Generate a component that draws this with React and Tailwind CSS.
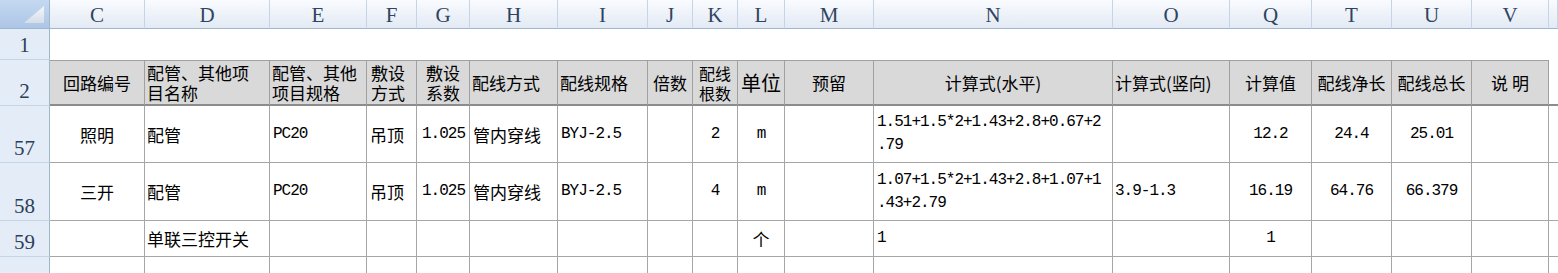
import React from 'react';

const CJK = "font-['Noto_Sans_CJK_SC',sans-serif]";
const MONO = "font-['Liberation_Mono','Noto_Sans_CJK_SC',monospace] text-[16px] tracking-[-1px]";

const letters = ['C', 'D', 'E', 'F', 'G', 'H', 'I', 'J', 'K', 'L', 'M', 'N', 'O', 'Q', 'T', 'U', 'V', ''];

const heads = [
    { t: '回路编号', a: 'justify-center' },
    { t: ['配管、其他项', '目名称'], a: 'justify-start pl-[2px]' },
    { t: ['配管、其他', '项目规格'], a: 'justify-start pl-[2px]' },
    { t: ['敷设', '方式'], a: 'justify-start pl-[4px]' },
    { t: ['敷设', '系数'], a: 'justify-center' },
    { t: '配线方式', a: 'justify-start pl-[2px]' },
    { t: '配线规格', a: 'justify-start pl-[2px]' },
    { t: '倍数', a: 'justify-center' },
    { t: ['配线', '根数'], a: 'justify-center', s: 'text-[16px]' },
    { t: '单位', a: 'justify-center', s: 'text-[20px]' },
    { t: '预留', a: 'justify-center' },
    { t: '计算式(水平)', a: 'justify-center' },
    { t: '计算式(竖向)', a: 'justify-start pl-[2px]' },
    { t: '计算值', a: 'justify-center' },
    { t: '配线净长', a: 'justify-center' },
    { t: '配线总长', a: 'justify-center' },
    { t: '说 明', a: 'justify-center' },
];

// a = alignment, m = mono font
const rows = [
    {
        n: 57,
        cells: [
            { t: '照明', a: 'justify-center' },
            { t: '配管', a: 'justify-start pl-[2px]' },
            { t: 'PC20', a: 'justify-start pl-[3px]', m: true },
            { t: '吊顶', a: 'justify-start pl-[3px]' },
            { t: '1.025', a: 'justify-start pl-[5px]', m: true },
            { t: '管内穿线', a: 'justify-start pl-[3px]' },
            { t: 'BYJ-2.5', a: 'justify-start pl-[3px]', m: true },
            { t: '' },
            { t: '2', a: 'justify-center', m: true },
            { t: 'm', a: 'justify-center', m: true },
            { t: '' },
            { t: ['1.51+1.5*2+1.43+2.8+0.67+2', '.79'], a: 'justify-start pl-[3px]', m: true },
            { t: '' },
            { t: '12.2', a: 'justify-center', m: true },
            { t: '24.4', a: 'justify-center', m: true },
            { t: '25.01', a: 'justify-center', m: true },
            { t: '' },
        ],
    },
    {
        n: 58,
        cells: [
            { t: '三开', a: 'justify-center' },
            { t: '配管', a: 'justify-start pl-[2px]' },
            { t: 'PC20', a: 'justify-start pl-[3px]', m: true },
            { t: '吊顶', a: 'justify-start pl-[3px]' },
            { t: '1.025', a: 'justify-start pl-[5px]', m: true },
            { t: '管内穿线', a: 'justify-start pl-[3px]' },
            { t: 'BYJ-2.5', a: 'justify-start pl-[3px]', m: true },
            { t: '' },
            { t: '4', a: 'justify-center', m: true },
            { t: 'm', a: 'justify-center', m: true },
            { t: '' },
            { t: ['1.07+1.5*2+1.43+2.8+1.07+1', '.43+2.79'], a: 'justify-start pl-[3px]', m: true },
            { t: '3.9-1.3', a: 'justify-start pl-[2px]', m: true },
            { t: '16.19', a: 'justify-center', m: true },
            { t: '64.76', a: 'justify-center', m: true },
            { t: '66.379', a: 'justify-center', m: true },
            { t: '' },
        ],
    },
    {
        n: 59,
        cells: [
            { t: '' },
            { t: '单联三控开关', a: 'justify-start pl-[2px]' },
            { t: '' },
            { t: '' },
            { t: '' },
            { t: '' },
            { t: '' },
            { t: '' },
            { t: '' },
            { t: '个', a: 'justify-center' },
            { t: '' },
            { t: '1', a: 'justify-start pl-[3px]', m: true },
            { t: '' },
            { t: '1', a: 'justify-center', m: true },
            { t: '' },
            { t: '' },
            { t: '' },
        ],
    },
    { n: 60, cells: Array.from({ length: 17 }, () => ({ t: '' })) },
];

const Lines = ({ t }) =>
    Array.isArray(t) ? (
        <span className="block">
            {t.map((l, i) => (
                <span key={i} className="block">{l}</span>
            ))}
        </span>
    ) : (
        t
    );

const RowLabel = ({ children }) => (
    <div className="flex items-end justify-center pb-[3px] bg-[#e4ecf7] border-r border-r-[#9eb6ce] border-b border-b-[#c5d5e8] font-['Liberation_Serif',serif] text-[21px] leading-none text-[#2b3f57]">
        {children}
    </div>
);

const App = () => {
    return (
        <div className="w-[1558px] h-[273px] overflow-hidden bg-white">
            <div className="grid grid-cols-[50px_95px_125px_97px_50px_53px_88px_90px_45px_45px_47px_89px_239px_117px_82px_80px_80px_77px_1fr] grid-rows-[29px_31px_46px_57px_58px_36px_40px] text-black">
                {/* corner */}
                <div className="relative bg-gradient-to-b from-[#c4d8f0] to-[#adc6e6] border-r border-r-[#9eb6ce] border-b border-b-[#9eb6ce]">
                    <svg className="absolute right-[5px] bottom-[5px]" width="20" height="17" viewBox="0 0 20 17">
                        <defs>
                            <linearGradient id="tri" x1="0" y1="0" x2="0" y2="1">
                                <stop offset="0" stopColor="#f4f7fb" />
                                <stop offset="1" stopColor="#d5dde8" />
                            </linearGradient>
                        </defs>
                        <polygon points="20,0 20,17 0,17" fill="url(#tri)" />
                    </svg>
                </div>
                {letters.map((l, i) => (
                    <div
                        key={i}
                        className="flex items-center justify-center bg-gradient-to-b from-[#f9fbfe] to-[#e3eaf4] border-r border-r-[#c5d4e6] border-b border-b-[#9eb6ce] font-['Liberation_Serif',serif] text-[21px] leading-none text-[#2f4461] pt-[2px]"
                    >
                        {l}
                    </div>
                ))}

                {/* row 1 */}
                <RowLabel>1</RowLabel>
                <div className="col-span-18 bg-white" />

                {/* row 2 */}
                <RowLabel>2</RowLabel>
                {heads.map((h, i) => (
                    <div
                        key={i}
                        className={`flex items-center ${h.a} bg-[#d9d9d9] border-t border-t-[#a0a0a0] border-r border-r-[#a0a0a0] border-b-2 border-b-[#8c8c8c] ${CJK} ${h.s || 'text-[17px]'} leading-[20px] whitespace-nowrap overflow-hidden`}
                    >
                        <Lines t={h.t} />
                    </div>
                ))}
                <div className="bg-white border-b-2 border-b-[#8c8c8c]" />

                {/* data rows */}
                {rows.map((r) => (
                    <React.Fragment key={r.n}>
                        <RowLabel>{r.n}</RowLabel>
                        {r.cells.map((c, i) => (
                            <div
                                key={i}
                                className={`flex items-center ${c.a || ''} bg-white border-r border-r-[#a6a6a6] border-b border-b-[#a6a6a6] ${c.m ? MONO : `${CJK} text-[17px]`} leading-[23px] whitespace-nowrap overflow-hidden`}
                            >
                                <Lines t={c.t} />
                            </div>
                        ))}
                        <div className="bg-white border-b border-b-[#a6a6a6]" />
                    </React.Fragment>
                ))}
            </div>
        </div>
    );
};

export default App;
